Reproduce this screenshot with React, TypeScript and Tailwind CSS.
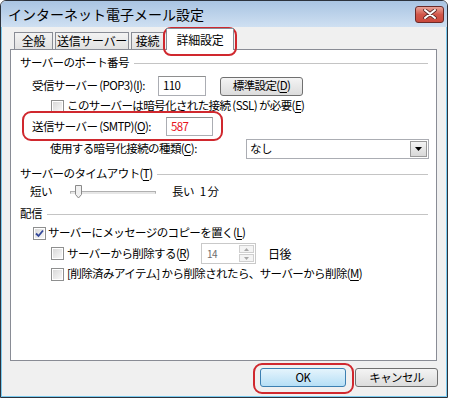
import { type FC, type ReactNode } from "react"

const Key: FC<{ k: string }> = ({ k }) => <span className="underline underline-offset-[2px]">{k}</span>

const CheckBox: FC<{ checked?: boolean }> = ({ checked }) => (
    <span className="w-[13px] h-[13px] shrink-0 border border-[#8e8f8f] bg-white p-px flex">
        <span className="flex-1 bg-linear-to-br from-[#d9d9d9] to-[#f8f8f8] flex items-center justify-center">
            {checked && (
                <svg width="9" height="9" viewBox="0 0 9 9">
                    <path d="M1 4.5 L3.5 7 L8 1.5" fill="none" stroke="#33489a" strokeWidth="1.8" />
                </svg>
            )}
        </span>
    </span>
)

const Group: FC<{ children: ReactNode }> = ({ children }) => (
    <div className="flex items-center h-[14px] pl-[9px] pr-[8px] gap-[5px]">
        <span className="whitespace-nowrap">{children}</span>
        <div className="flex-1 h-px bg-[#c4c4c4]" />
    </div>
)

const Tab: FC<{ label: string; w: string; selected?: boolean }> = ({ label, w, selected }) =>
    selected ? (
        <div className={`${w} h-[22px] -mb-px relative z-10 bg-white border border-b-0 border-[#898c95] flex items-center justify-center`}>
            {label}
        </div>
    ) : (
        <div className={`${w} h-[17px] border border-b-0 border-[#898c95] bg-linear-to-b from-[#f3f3f3] to-[#e1e1e1] flex items-center justify-center`}>
            {label}
        </div>
    )

const App: FC = () => {
    return (
        <div className="w-[450px] h-[398px] overflow-hidden bg-white font-['Noto_Sans_CJK_JP','Noto_Sans',sans-serif] text-[11.5px] tracking-[-0.6px] leading-none text-black">
            <div className="relative w-[448px] h-[398px] border border-[#2c323c] rounded-t-[6px] flex flex-col overflow-hidden">
                {/* title bar */}
                <div className="h-[26px] shrink-0 bg-linear-to-b from-[#a9c4e2] to-[#cfe0f2] flex items-center pl-[7px] pr-[3px]">
                    <span className="text-[14px] tracking-normal text-black">インターネット電子メール設定</span>
                    <div className="ml-auto w-[29px] h-[17px] rounded-[3px] border border-[#6b2a28] bg-linear-to-b from-[#e8a49a] via-[#d2574a] to-[#c9483c] flex items-center justify-center">
                        <svg width="14" height="10" viewBox="0 0 14 10">
                            <path d="M2 1 L12 9 M12 1 L2 9" stroke="#5a2a28" strokeWidth="3.6" strokeLinecap="round" />
                            <path d="M2 1 L12 9 M12 1 L2 9" stroke="#ffffff" strokeWidth="2" strokeLinecap="round" />
                        </svg>
                    </div>
                </div>

                {/* body */}
                <div className="flex-1 bg-[#f0f0f0] border-l border-r border-b border-[#7ccbef] flex flex-col">
                    {/* tabs */}
                    <div className="flex items-end h-[22px] pl-[12px] gap-[2px] text-[12px] tracking-[-0.3px]">
                        <Tab label="全般" w="w-[39px]" />
                        <Tab label="送信サーバー" w="w-[74px]" />
                        <Tab label="接続" w="w-[33px]" />
                        <Tab label="詳細設定" w="w-[68px]" selected />
                    </div>

                    {/* panel */}
                    <div className="ml-[8px] w-[427px] h-[312px] border border-[#898c95] bg-white pt-[6px] flex flex-col">
                        <Group>サーバーのポート番号</Group>

                        <div className="mt-[6px] h-[20px] flex items-center pl-[21px]">
                            <span className="w-[126px] whitespace-nowrap">受信サーバー (POP3)(<Key k="I" />):</span>
                            <div className="w-[48px] h-[20px] border border-[#abadb3] border-t-[#8e8f8f] bg-white flex items-center pl-[4px]">110</div>
                            <div className="ml-[14px] w-[83px] h-[19px] rounded-[3px] border border-[#707070] bg-linear-to-b from-[#f4f4f4] to-[#dcdcdc] flex items-center justify-center">
                                標準設定(<Key k="D" />)
                            </div>
                        </div>

                        <div className="mt-[3px] h-[14px] flex items-center pl-[40px] gap-[3px]">
                            <CheckBox />
                            <span className="whitespace-nowrap">このサーバーは暗号化された接続 (SSL) が必要(<Key k="E" />)</span>
                        </div>

                        <div className="mt-[4px] h-[19px] flex items-center pl-[21px]">
                            <span className="w-[134px] whitespace-nowrap">送信サーバー (SMTP)(<Key k="O" />):</span>
                            <div className="w-[47px] h-[19px] border border-[#abadb3] border-t-[#8e8f8f] bg-white flex items-center pl-[4px] text-[#e8141e]">587</div>
                        </div>

                        <div className="mt-[3px] h-[20px] flex items-center pl-[39px]">
                            <span className="w-[196px] whitespace-nowrap">使用する暗号化接続の種類(<Key k="C" />):</span>
                            <div className="w-[183px] h-[20px] border border-[#abadb3] bg-white flex items-center pl-[3px] pr-px">
                                <span>なし</span>
                                <div className="ml-auto w-[17px] h-[16px] border border-[#9a9a9a] bg-linear-to-b from-[#f4f4f4] to-[#d8d8d8] flex items-center justify-center">
                                    <svg width="7" height="4" viewBox="0 0 7 4"><path d="M0 0 H7 L3.5 4 Z" fill="#000" /></svg>
                                </div>
                            </div>
                        </div>

                        <div className="mt-[8px]">
                            <Group>
                                サーバーのタイムアウト(<Key k="T" />)
                            </Group>
                        </div>

                        <div className="mt-[3px] h-[16px] flex items-center pl-[19px]">
                            <span className="w-[40px]">短い</span>
                            <div className="relative w-[86px] h-[16px] flex items-center">
                                <div className="w-full h-[3px] border border-[#b0b0b0] border-b-[#e6e6e6] bg-[#e7e7e7]" />
                                <svg className="absolute left-[5px] top-[1px]" width="7" height="14" viewBox="0 0 7 14">
                                    <path d="M0.5 0.5 H6.5 V9.5 L3.5 13 L0.5 9.5 Z" fill="#f0f0f0" stroke="#8a8a8a" />
                                </svg>
                            </div>
                            <span className="ml-[16px]">長い</span>
                            <span className="ml-[6px]">1 分</span>
                        </div>

                        <div className="mt-[7px]">
                            <Group>配信</Group>
                        </div>

                        <div className="mt-[5px] h-[14px] flex items-center pl-[22px] gap-[2px]">
                            <CheckBox checked />
                            <span className="whitespace-nowrap">サーバーにメッセージのコピーを置く(<Key k="L" />)</span>
                        </div>

                        <div className="mt-[3px] h-[21px] flex items-center pl-[40px] gap-[3px]">
                            <CheckBox />
                            <span className="w-[131px] whitespace-nowrap">サーバーから削除する(<Key k="R" />)</span>
                            <div className="w-[55px] h-[21px] border border-[#c9c9c9] bg-white flex items-center pl-[5px] pr-px text-[10px] text-[#6d6d6d]">
                                14
                                <div className="ml-auto w-[15px] h-[17px] flex flex-col gap-px">
                                    <div className="flex-1 border border-[#cfcfcf] bg-[#f4f4f4] flex items-center justify-center">
                                        <svg width="5" height="3" viewBox="0 0 5 3"><path d="M0 3 H5 L2.5 0 Z" fill="#a8a8a8" /></svg>
                                    </div>
                                    <div className="flex-1 border border-[#cfcfcf] bg-[#f4f4f4] flex items-center justify-center">
                                        <svg width="5" height="3" viewBox="0 0 5 3"><path d="M0 0 H5 L2.5 3 Z" fill="#a8a8a8" /></svg>
                                    </div>
                                </div>
                            </div>
                            <span className="ml-[9px] text-[12px]">日後</span>
                        </div>

                        <div className="mt-[3px] h-[14px] flex items-center pl-[40px] gap-[3px]">
                            <CheckBox />
                            <span className="whitespace-nowrap">[削除済みアイテム] から削除されたら、サーバーから削除(<Key k="M" />)</span>
                        </div>
                    </div>

                    {/* buttons */}
                    <div className="mt-[7px] flex items-center pl-[258px] gap-[9px]">
                        <div className="w-[86px] h-[19px] rounded-[3px] border border-[#3c7fb1] bg-linear-to-b from-[#e5f4fc] to-[#b6dff6] flex items-center justify-center">
                            OK
                        </div>
                        <div className="w-[83px] h-[19px] rounded-[3px] border border-[#707070] bg-linear-to-b from-[#f4f4f4] to-[#dcdcdc] flex items-center justify-center">
                            キャンセル
                        </div>
                    </div>
                </div>

                {/* red highlights */}
                <div className="absolute left-[162px] top-[26px] w-[74px] h-[29px] border-2 border-[#d0282e] rounded-[8px] pointer-events-none" />
                <div className="absolute left-[21px] top-[110px] w-[201px] h-[30px] border-2 border-[#d0282e] rounded-[9px] pointer-events-none" />
                <div className="absolute left-[252px] top-[362px] w-[101px] h-[31px] border-2 border-[#d0282e] rounded-[9px] pointer-events-none" />
            </div>
        </div>
    )
}

export default App
